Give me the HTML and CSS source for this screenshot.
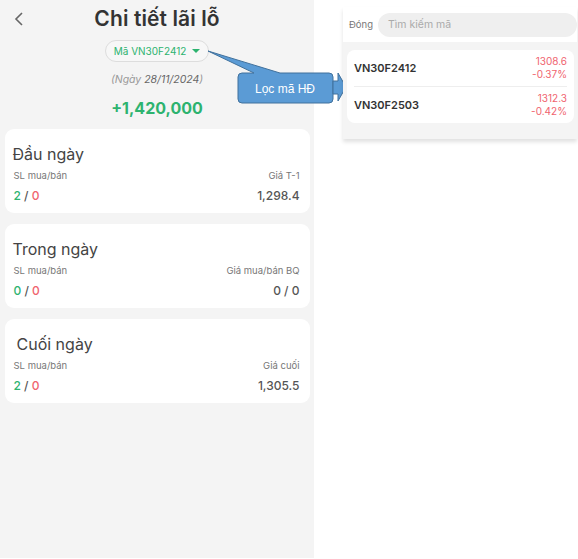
FILE: index.html
```html
<!DOCTYPE html>
<html lang="vi">

<head>
    <meta charset="UTF-8">
    <meta name="viewport" content="width=device-width, initial-scale=1.0">
    <title>Chi tiết lãi lỗ</title>
    <link rel="stylesheet" href="styles.css">
</head>

<body>
    <div class="screen">
        <div class="header">
            <span class="back">
                <svg width="10" height="14" viewBox="0 0 10 14"><path d="M8 1 L2 7 L8 13" fill="none" stroke="#666" stroke-width="1.6"/></svg>
            </span>
            <h1>Chi tiết lãi lỗ</h1>
        </div>

        <div class="filter">
            <span class="pill">Mã VN30F2412 <span class="caret"></span></span>
        </div>
        <div class="date">(Ngày <b>28/11/2024</b>)</div>
        <div class="total">+1,420,000</div>

        <div class="card">
            <h2>Đầu ngày</h2>
            <div class="row labels">
                <span>SL mua/bán</span>
                <span>Giá T-1</span>
            </div>
            <div class="row values">
                <span><i class="buy">2</i> / <i class="sell">0</i></span>
                <span>1,298.4</span>
            </div>
        </div>

        <div class="card">
            <h2>Trong ngày</h2>
            <div class="row labels">
                <span>SL mua/bán</span>
                <span>Giá mua/bán BQ</span>
            </div>
            <div class="row values">
                <span><i class="buy">0</i> / <i class="sell">0</i></span>
                <span>0 / 0</span>
            </div>
        </div>

        <div class="card">
            <h2 class="indent">Cuối ngày</h2>
            <div class="row labels">
                <span>SL mua/bán</span>
                <span>Giá cuối</span>
            </div>
            <div class="row values">
                <span><i class="buy">2</i> / <i class="sell">0</i></span>
                <span>1,305.5</span>
            </div>
        </div>
    </div>

    <!-- callout over the screenshot -->
    <svg class="callout" width="150" height="70" viewBox="0 0 150 70">
        <path d="M46 26 L0 4 L72 26 L121 26 Q125 26 125 30 L125 52 Q125 56 121 56 L34 56 Q30 56 30 52 L30 30 Q30 26 34 26 Z" fill="#5b9bd5" stroke="#41719c" stroke-width="1"/>
        <path d="M125 34 L130 34 L130 26 L138 40 L130 54 L130 47 L125 47 Z" fill="#5b9bd5" stroke="#41719c" stroke-width="1"/>
        <text x="77" y="45.5" text-anchor="middle" font-family="Liberation Sans, Arial, sans-serif" font-size="12" fill="#fff">Lọc mã HĐ</text>
    </svg>

    <div class="panel">
        <div class="search">
            <span class="close">Đóng</span>
            <span class="input">Tìm kiếm mã</span>
        </div>
        <div class="list">
            <ul>
                <li>
                    <span class="code">VN30F2412</span>
                    <span class="price">1308.6<br>-0.37%</span>
                </li>
                <li>
                    <span class="code">VN30F2503</span>
                    <span class="price">1312.3<br>-0.42%</span>
                </li>
            </ul>
        </div>
    </div>
</body>

</html>
```

FILE: styles.css
```css
body {
    margin: 0;
    padding: 0;
    background: #fff;
    font-family: Inter, "Noto Sans", sans-serif;
    color: #333;
    position: relative;
    width: 578px;
    height: 559px;
}

.screen {
    width: 314px;
    height: 558px;
    background: #f4f4f4;
    display: flex;
    flex-direction: column;
    align-items: center;
}

.header {
    width: 100%;
    height: 36px;
    position: relative;
    display: flex;
    justify-content: center;
    align-items: center;
}

.back {
    position: absolute;
    left: 14px;
    top: 10px;
}

h1 {
    margin: 0;
    font-size: 21px;
    font-weight: 600;
    color: #333;
    letter-spacing: 0.1px;
}

.filter {
    margin-top: 3px;
}

.pill {
    display: inline-flex;
    align-items: center;
    gap: 6px;
    height: 20px;
    padding: 0 8px;
    border: 1px solid #ddd;
    border-radius: 11px;
    font-size: 10px;
    color: #2db36f;
    background: #f7f7f7;
}

.caret {
    width: 0;
    height: 0;
    border-left: 4px solid transparent;
    border-right: 4px solid transparent;
    border-top: 4px solid #2db36f;
}

.date {
    margin-top: 11px;
    font-size: 10.5px;
    font-style: italic;
    color: #999;
}

.date b {
    font-weight: 400;
    color: #666;
}

.total {
    margin-top: 12px;
    font-size: 16px;
    font-weight: 700;
    color: #2db36f;
}

.card {
    width: 305px;
    box-sizing: border-box;
    background: #fff;
    border-radius: 9px;
    padding: 15px 10px 10px 8px;
    margin-top: 11px;
}

.card:first-of-type {
    margin-top: 15px;
}

h2 {
    margin: 0 0 6px 0;
    font-size: 16px;
    font-weight: 400;
    color: #444;
}

h2.indent {
    margin-left: 4px;
}

.row {
    display: flex;
    justify-content: space-between;
    padding-left: 1px;
}

.labels {
    font-size: 9.5px;
    color: #777;
}

.values {
    margin-top: 7px;
    font-size: 12px;
    font-weight: 500;
    color: #555;
}

.values i {
    font-style: normal;
}

.buy {
    color: #2db36f;
}

.sell {
    color: #f0636e;
}

.callout {
    position: absolute;
    left: 208px;
    top: 47px;
}

.panel {
    position: absolute;
    left: 343px;
    top: 7px;
    width: 234px;
    background: #f4f4f4;
    box-shadow: 0 3px 4px rgba(0, 0, 0, 0.12);
}

.search {
    background: #fff;
    height: 35px;
    display: flex;
    align-items: center;
    gap: 5px;
    padding-left: 6px;
}

.close {
    font-size: 9.5px;
    color: #777;
}

.input {
    flex: 1;
    height: 24px;
    line-height: 24px;
    border-radius: 12px;
    background: #efefef;
    font-size: 10.5px;
    color: #aaa;
    padding-left: 10px;
}

.list {
    padding: 8px 3px 16px 4px;
}

ul {
    list-style-type: none;
    margin: 0;
    padding: 0 7px;
    background: #fff;
    border-radius: 8px;
}

li {
    display: flex;
    justify-content: space-between;
    align-items: center;
    height: 36px;
    border-bottom: 1px solid #eee;
}

li:last-child {
    border-bottom: none;
}

.code {
    font-size: 11px;
    font-weight: 600;
    color: #333;
}

.price {
    font-size: 10px;
    color: #f0636e;
    text-align: right;
    line-height: 13px;
}
```
